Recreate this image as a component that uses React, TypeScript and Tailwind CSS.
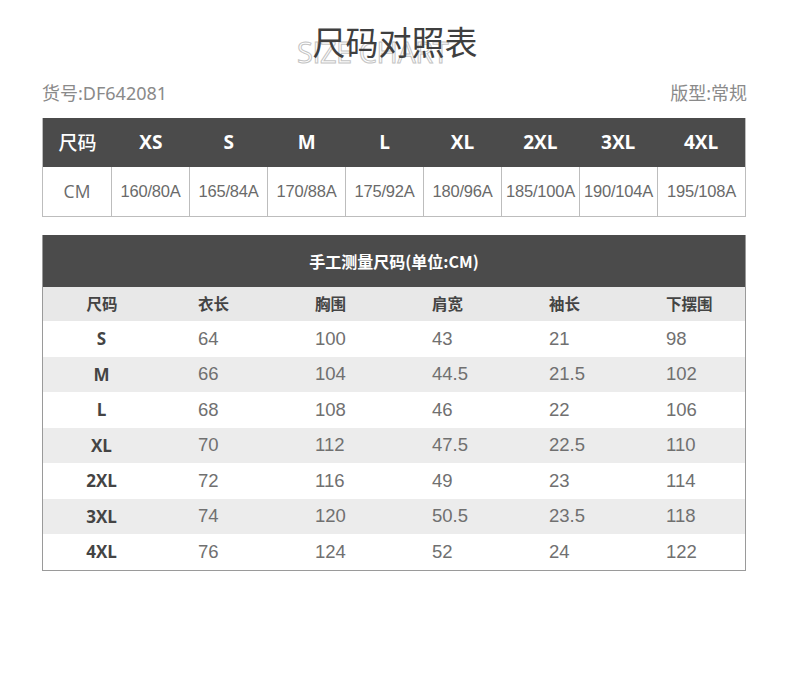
import React from "react";

const sizes = ["XS", "S", "M", "L", "XL", "2XL", "3XL", "4XL"];
const cms = ["160/80A", "165/84A", "170/88A", "175/92A", "180/96A", "185/100A", "190/104A", "195/108A"];
const heads = ["尺码", "衣长", "胸围", "肩宽", "袖长", "下摆围"];
const rows = [
  ["S", "64", "100", "43", "21", "98"],
  ["M", "66", "104", "44.5", "21.5", "102"],
  ["L", "68", "108", "46", "22", "106"],
  ["XL", "70", "112", "47.5", "22.5", "110"],
  ["2XL", "72", "116", "49", "23", "114"],
  ["3XL", "74", "120", "50.5", "23.5", "118"],
  ["4XL", "76", "124", "52", "24", "122"],
];

const cjk = "font-['Noto_Sans','Noto_Sans_CJK_SC',sans-serif]";
const num = "font-['Liberation_Sans','Noto_Sans_CJK_SC',sans-serif]";

export default function App() {
  return (
    <div className={`w-[790px] h-[700px] bg-white ${cjk}`}>
      <div className="relative h-[78px] flex justify-center">
        <div className="absolute left-[297px] top-[37px] text-[29px] leading-none tracking-[-0.5px] font-normal text-transparent [-webkit-text-stroke:1px_#c4c4c4] font-['Open_Sans',sans-serif]">
          SIZE CHART
        </div>
        <div className="relative mt-[19px] text-[33px] leading-[44px] text-[#3f3f3f] font-['Noto_Sans_CJK_SC',sans-serif]">
          尺码对照表
        </div>
      </div>
      <div className="flex justify-between px-[42px] text-[18px] text-[#8a8a8a] leading-[30px] font-['Noto_Sans','Noto_Sans_CJK_SC',sans-serif]">
        <span>货号:DF642081</span>
        <span className="pr-[1px]">版型:常规</span>
      </div>
      <div className="mx-[42px] mt-[10px] w-[704px] border border-[#bdbdbd] border-t-0">
        <div className="flex h-[49px] bg-[#4b4b4b] text-white font-bold items-center">
          <div className="w-[69px] text-center text-[19px] font-['Noto_Sans_CJK_SC',sans-serif] font-medium">尺码</div>
          {sizes.map((s, i) => (
            <div key={s} className={`${i === 7 ? "w-[88px]" : "w-[78px]"} text-center text-[19px] font-['Open_Sans',sans-serif]`}>
              {s}
            </div>
          ))}
        </div>
        <div className="flex h-[49px] items-center text-[#6a6a6a]">
          <div className="w-[69px] h-full flex items-center justify-center text-[17.5px] font-['Open_Sans',sans-serif] border-r border-[#bdbdbd]">CM</div>
          {cms.map((c, i) => (
            <div
              key={c}
              className={`${i === 7 ? "w-[87px]" : "w-[78px] border-r border-[#bdbdbd]"} h-full flex items-center justify-center text-[16.5px] tracking-[-0.2px] ${num}`}
            >
              {c}
            </div>
          ))}
        </div>
      </div>
      <div className="mx-[42px] mt-[18px] w-[704px] border border-[#9a9a9a] border-t-0">
        <div className="h-[52px] bg-[#4b4b4b] flex items-center justify-center text-white text-[16px] font-bold font-['Noto_Sans_CJK_SC',sans-serif]">
          手工测量尺码(单位:CM)
        </div>
        <div className="grid grid-cols-6 h-[34px] bg-[#e8e8e8] items-center text-[15.5px] font-bold text-[#444] font-['Noto_Sans_CJK_SC',sans-serif]">
          {heads.map((h, i) => (
            <div key={h} className={i === 0 ? "text-center pl-[1px]" : "pl-[38px]"}>
              {h}
            </div>
          ))}
        </div>
        {rows.map((r, ri) => (
          <div
            key={r[0]}
            className={`grid grid-cols-6 h-[35.5px] items-center ${ri % 2 === 1 ? "bg-[#ececec]" : "bg-white"}`}
          >
            {r.map((v, i) => (
              <div
                key={i}
                className={
                  i === 0
                    ? "text-center text-[17px] font-bold text-[#444] font-['Open_Sans',sans-serif]"
                    : `pl-[38px] text-[18.5px] text-[#707070] ${num}`
                }
              >
                {v}
              </div>
            ))}
          </div>
        ))}
      </div>
    </div>
  );
}
